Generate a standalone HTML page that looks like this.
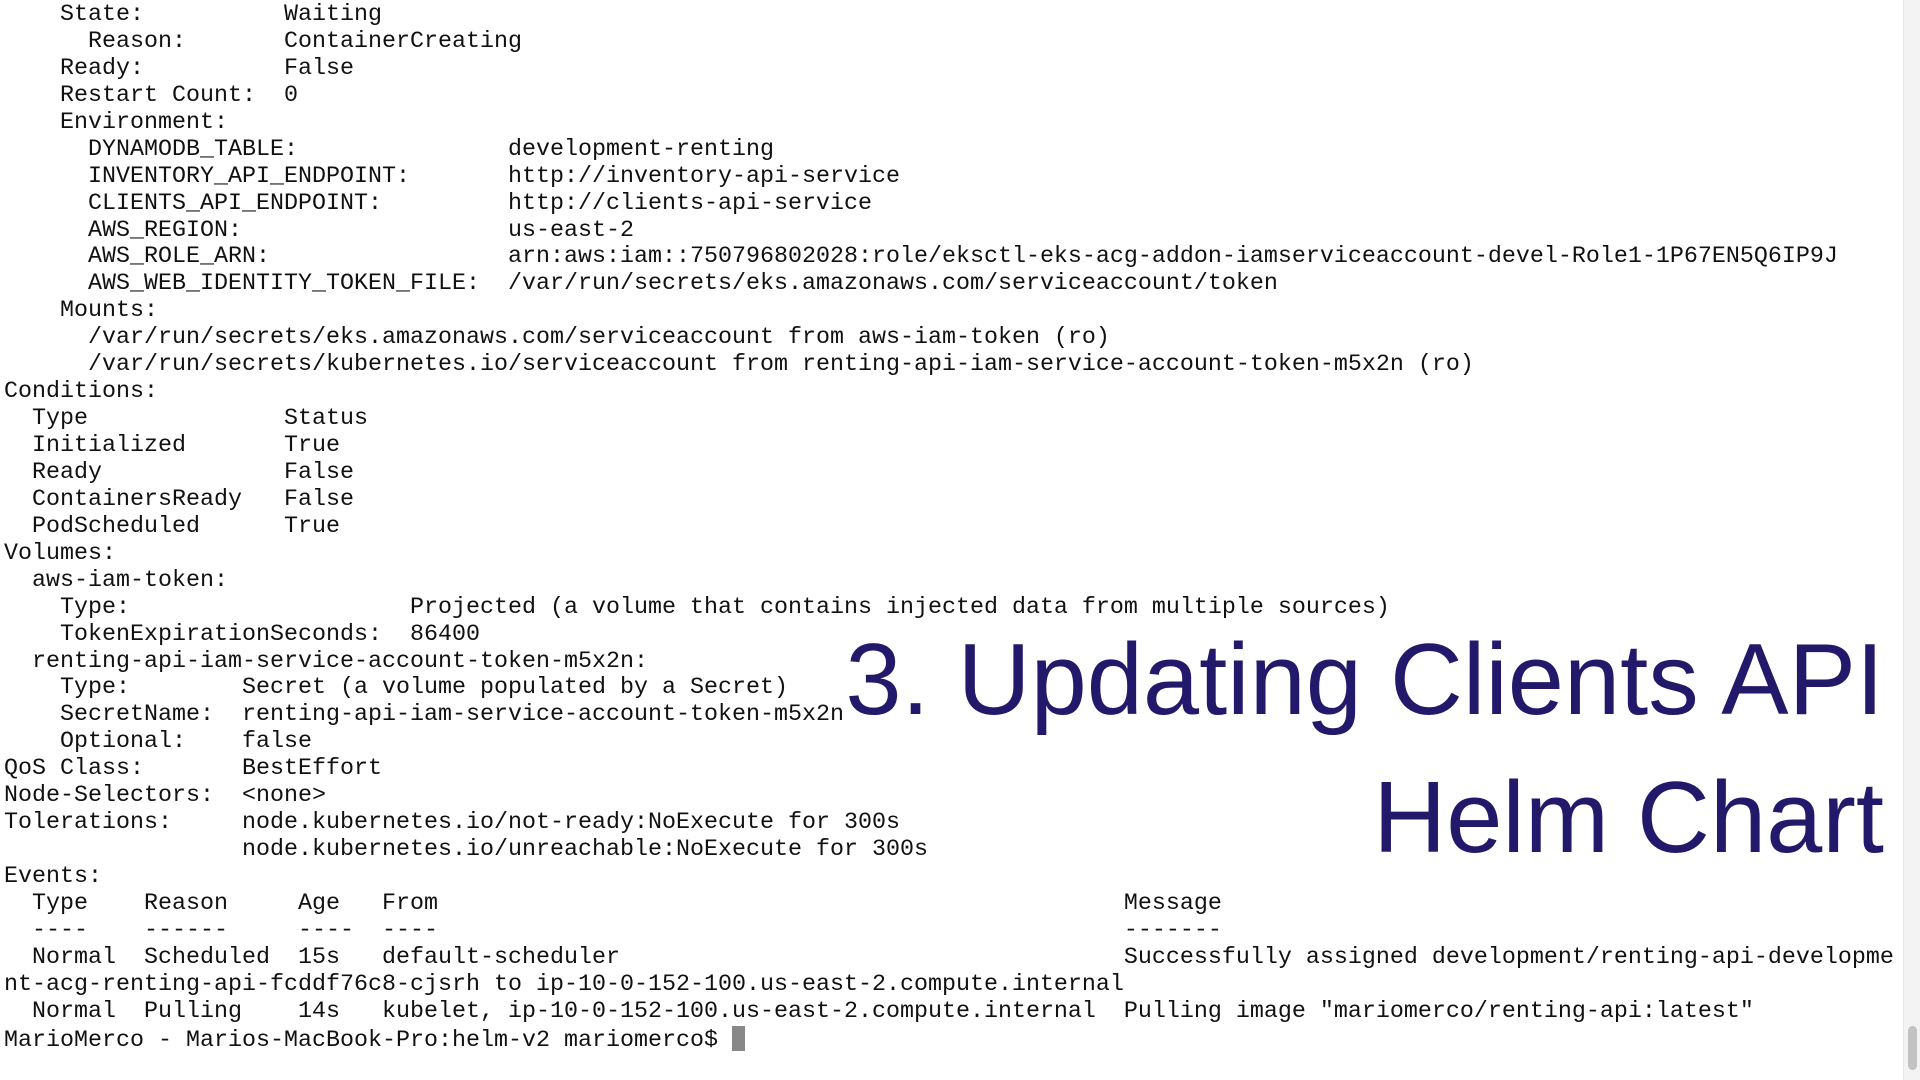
<!DOCTYPE html>
<html><head><meta charset="utf-8"><style>
html,body{margin:0;padding:0;background:#fff;width:1920px;height:1080px;overflow:hidden;position:relative}
pre{position:absolute;left:4px;top:2px;margin:0;font-family:"Liberation Mono",monospace;font-size:23.33px;line-height:26.94px;color:#111;}
.t{position:absolute;right:36px;font-family:"Liberation Sans",sans-serif;font-size:101px;color:#23196a;white-space:nowrap;line-height:1}
.sb{position:absolute;right:0;top:0;width:16px;height:1080px;background:#f3f3f3;border-left:1px solid #e6e6e6}
.th{position:absolute;right:3px;top:1026px;width:9px;height:44px;background:#c2c2c2;border-radius:5px}
.cur{display:inline-block;width:13px;height:25px;background:#888;vertical-align:-5px}
</style></head><body>
<pre>    State:          Waiting
      Reason:       ContainerCreating
    Ready:          False
    Restart Count:  0
    Environment:
      DYNAMODB_TABLE:               development-renting
      INVENTORY_API_ENDPOINT:       http://inventory-api-service
      CLIENTS_API_ENDPOINT:         http://clients-api-service
      AWS_REGION:                   us-east-2
      AWS_ROLE_ARN:                 arn:aws:iam::750796802028:role/eksctl-eks-acg-addon-iamserviceaccount-devel-Role1-1P67EN5Q6IP9J
      AWS_WEB_IDENTITY_TOKEN_FILE:  /var/run/secrets/eks.amazonaws.com/serviceaccount/token
    Mounts:
      /var/run/secrets/eks.amazonaws.com/serviceaccount from aws-iam-token (ro)
      /var/run/secrets/kubernetes.io/serviceaccount from renting-api-iam-service-account-token-m5x2n (ro)
Conditions:
  Type              Status
  Initialized       True
  Ready             False
  ContainersReady   False
  PodScheduled      True
Volumes:
  aws-iam-token:
    Type:                    Projected (a volume that contains injected data from multiple sources)
    TokenExpirationSeconds:  86400
  renting-api-iam-service-account-token-m5x2n:
    Type:        Secret (a volume populated by a Secret)
    SecretName:  renting-api-iam-service-account-token-m5x2n
    Optional:    false
QoS Class:       BestEffort
Node-Selectors:  &lt;none&gt;
Tolerations:     node.kubernetes.io/not-ready:NoExecute for 300s
                 node.kubernetes.io/unreachable:NoExecute for 300s
Events:
  Type    Reason     Age   From                                                 Message
  ----    ------     ----  ----                                                 -------
  Normal  Scheduled  15s   default-scheduler                                    Successfully assigned development/renting-api-developme
nt-acg-renting-api-fcddf76c8-cjsrh to ip-10-0-152-100.us-east-2.compute.internal
  Normal  Pulling    14s   kubelet, ip-10-0-152-100.us-east-2.compute.internal  Pulling image "mariomerco/renting-api:latest"
MarioMerco - Marios-MacBook-Pro:helm-v2 mariomerco$ <span class="cur"></span></pre>
<div class="t" style="top:630px">3. Updating Clients API</div>
<div class="t" style="top:768px">Helm Chart</div>
<div class="sb"><div class="th"></div></div>
</body></html>
